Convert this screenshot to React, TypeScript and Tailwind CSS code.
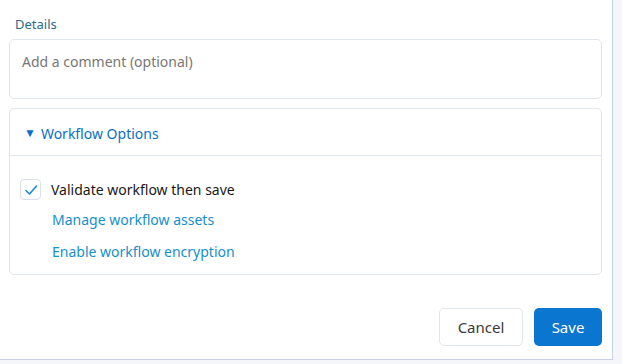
export default function App() {
  return (
    <div className="h-[364px] w-[622px] bg-[#f4f6fa]" style={{ fontFamily: '"Noto Sans", "Open Sans", sans-serif' }}>
      <div className="flex h-[360px] w-[613px] flex-col border-r border-b border-[#c9d3e6] bg-white pl-[9px] pr-[10px] pt-[14px]">
        <label className="pl-[6px] text-[13px] leading-[20px] text-[#2d6a8e]">Details</label>
        <div className="mt-[5px] h-[60px] rounded-[5px] border border-[#dfe5ef] px-[12px] pt-[12px] text-[14px] leading-[20px] text-[#7a7774]">
          Add a comment (optional)
        </div>
        <div className="mt-[9px] rounded-[5px] border border-[#dfe5ef]">
          <div className="flex h-[47px] items-center gap-[5px] border-b border-[#dfe5ef] pl-[14px] pt-[2px] text-[14px] text-[#0b6fc9]">
            <span className="text-[12px]">▼</span>
            <span>Workflow Options</span>
          </div>
          <div className="flex flex-col pb-[12px] pl-[10px] pt-[23px] text-[14px]">
            <div className="flex items-center gap-[10px]">
              <span className="flex h-[21px] w-[21px] items-center justify-center rounded-[4px] border border-[#d8e0ec]">
                <svg width="14" height="14" viewBox="0 0 14 14" fill="none">
                  <path d="M2 7.5 L5.5 11 L12.5 3" stroke="#1b87d6" strokeWidth="1.6" strokeLinecap="round" strokeLinejoin="round" />
                </svg>
              </span>
              <span className="leading-[20px] text-[#181818]">Validate workflow then save</span>
            </div>
            <a className="mt-[10px] ml-[32px] leading-[20px] text-[#168fcc]">Manage workflow assets</a>
            <a className="mt-[12px] ml-[32px] leading-[20px] text-[#168fcc]">Enable workflow encryption</a>
          </div>
        </div>
        <div className="mt-[33px] flex justify-end gap-[11px]">
          <button className="h-[38px] w-[84px] rounded-[5px] border border-[#dfe5ef] bg-white text-[15px] text-[#3a3a3a]">Cancel</button>
          <button className="h-[38px] w-[68px] rounded-[5px] bg-[#0a76cf] text-[15px] text-white">Save</button>
        </div>
      </div>
    </div>
  );
}
